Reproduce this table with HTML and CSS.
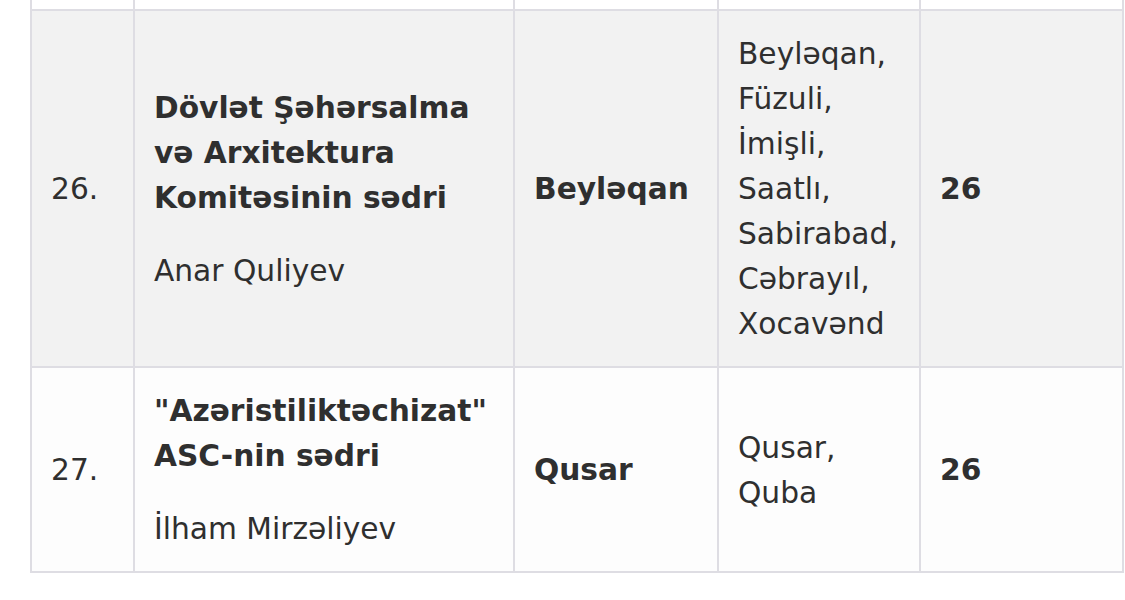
FILE: index.html
```html
<!DOCTYPE html>
<html lang="az">
<head>
<meta charset="utf-8">
<link rel="stylesheet" href="styles.css">
</head>
<body>
<table class="list">
  <colgroup>
    <col class="c-num">
    <col class="c-pos">
    <col class="c-dist">
    <col class="c-area">
    <col class="c-count">
  </colgroup>
  <tr class="stub">
    <td></td><td></td><td></td><td></td><td></td>
  </tr>
  <tr class="odd">
    <td>26.</td>
    <td>
      <div class="title">Dövlət Şəhərsalma və Arxitektura Komitəsinin sədri</div>
      <div class="name">Anar Quliyev</div>
    </td>
    <td class="strong">Beyləqan</td>
    <td>Beyləqan,<br>Füzuli,<br>İmişli,<br>Saatlı,<br>Sabirabad,<br>Cəbrayıl,<br>Xocavənd</td>
    <td class="strong">26</td>
  </tr>
  <tr class="even">
    <td>27.</td>
    <td>
      <div class="title">"Azəristiliktəchizat" ASC-nin sədri</div>
      <div class="name">İlham Mirzəliyev</div>
    </td>
    <td class="strong">Qusar</td>
    <td>Qusar,<br>Quba</td>
    <td class="strong">26</td>
  </tr>
</table>
</body>
</html>
```

FILE: styles.css
```css
html, body {
  margin: 0;
  padding: 0;
  background: #ffffff;
}

body {
  font-family: "DejaVu Sans", Verdana, sans-serif;
  color: #2f2f2f;
  font-size: 29.7px;
  line-height: 45px;
}

.list {
  margin-left: 30px;
  width: 1094px;
  border-collapse: collapse;
  table-layout: fixed;
}

.c-num { width: 103px; }
.c-pos { width: 380px; }
.c-dist { width: 204px; }
.c-area { width: 202px; }
.c-count { width: 203px; }

.list td {
  border: 2px solid #dedde3;
  padding: 20px 16px 20px 19px;
  vertical-align: middle;
  text-align: left;
}

.stub td {
  border-top: none;
  padding: 0;
  height: 9px;
}

.odd td { background: #f2f2f2; }
.even td { background: #fdfdfd; }

.strong { font-weight: bold; }

.title {
  font-weight: bold;
}

.name {
  margin-top: 28px;
}
```
